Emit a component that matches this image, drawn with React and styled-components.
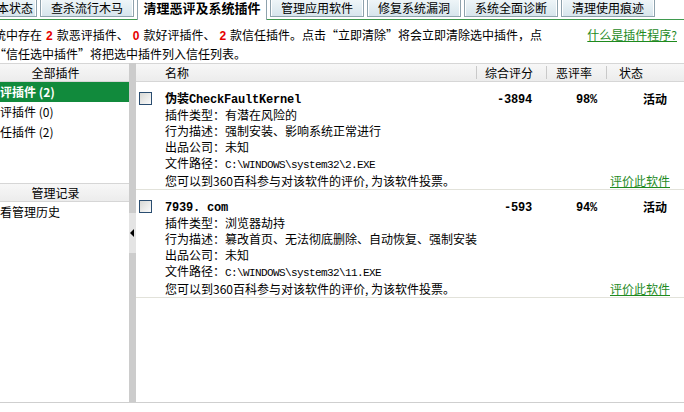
import React from 'react'
import styled, { createGlobalStyle } from 'styled-components'

const GlobalStyle = createGlobalStyle`
  html, body {
    margin: 0;
    padding: 0;
    background: #fff;
  }
  body {
    width: 684px;
    height: 412px;
    overflow: hidden;
    font-family: "Noto Sans CJK SC", "Liberation Sans", sans-serif;
    font-size: 12px;
    color: #000;
  }
`

const cols = `
  display: grid;
  grid-template-columns: 340px 70px 60px 1fr;
`

const TabStrip = styled.div`
  display: flex;
  align-items: flex-start;
  gap: 3px;
  height: 19px;
  margin-left: -33px;
  border-bottom: 1px solid #3f9a4e;
`

const Tab = styled.div`
  position: relative;
  z-index: ${p => (p.$active ? 1 : 0)};
  flex: none;
  box-sizing: border-box;
  width: ${p => p.$w}px;
  height: ${p => (p.$active ? 20 : 17)}px;
  padding-right: ${p => (p.$end ? 3 : 0)}px;
  border: 1px solid #8ea2ad;
  border-top: none;
  border-bottom: ${p => (p.$active ? 'none' : '1px solid #8ea2ad')};
  background: ${p => (p.$active ? '#fff' : 'linear-gradient(#eef5f8, #d7e5ec)')};
  box-shadow: inset 1px 0 0 #fff, inset -1px 0 0 #fff;
  text-align: ${p => (p.$end ? 'right' : 'center')};
  line-height: 16px;
  font-size: ${p => (p.$active ? 13 : 12)}px;
  font-weight: ${p => (p.$active ? 'bold' : 'normal')};
  white-space: nowrap;
`

const Desc = styled.div`
  display: flex;
  justify-content: space-between;
  align-items: flex-start;
  height: 34px;
  margin-top: 6px;
  line-height: 17px;
`

const DescText = styled.div`
  margin-left: -6px;
  white-space: nowrap;
`

const Count = styled.b`
  margin: 0 4px;
  color: #e60000;
  font-family: "Liberation Sans", sans-serif;
`

const HelpLink = styled.a`
  margin-right: 7px;
  color: #1e8a1e;
  text-decoration: underline;
  cursor: pointer;
`

const Main = styled.div`
  display: flex;
  height: 339px;
  margin-top: 3px;
  border-bottom: 1px solid #cfcfcf;
`

const Side = styled.div`
  flex: none;
  display: flex;
  flex-direction: column;
  width: 147px;
  margin-left: -18px;
`

const PanelHead = styled.div`
  height: 17px;
  margin-top: ${p => p.$top || 0}px;
  border-top: 1px solid #d6d6d6;
  border-bottom: 1px solid #d6d6d6;
  background: linear-gradient(#f7f7f7, #ececec);
  line-height: 17px;
  text-align: center;
`

const SideItem = styled.div`
  height: 20px;
  padding-left: 6px;
  line-height: 20px;
  white-space: nowrap;
  background: ${p => (p.$active ? '#118a3c' : 'transparent')};
  color: ${p => (p.$active ? '#fff' : '#000')};
  font-weight: ${p => (p.$active ? 'bold' : 'normal')};
`

const Splitter = styled.div`
  flex: none;
  display: flex;
  align-items: center;
  width: 7px;
  background: #cccccc;
`

const SplitHandle = styled.div`
  display: flex;
  align-items: center;
  justify-content: center;
  width: 7px;
  height: 40px;
  background: #e4e4e4;

  &::before {
    content: '';
    border-right: 4px solid #000;
    border-top: 4px solid transparent;
    border-bottom: 4px solid transparent;
    margin-right: 2px;
  }
`

const Content = styled.div`
  flex: 1;
  min-width: 0;
  display: flex;
  flex-direction: column;
`

const ListHead = styled.div`
  ${cols}
  height: 17px;
  border-top: 1px solid #d6d6d6;
  border-bottom: 1px solid #d6d6d6;
  background: linear-gradient(#f7f7f7, #ececec);
  line-height: 17px;
`

const HeadCell = styled.div`
  position: relative;
  padding-left: ${p => p.$pad}px;
  white-space: nowrap;

  &::before {
    content: '';
    display: ${p => (p.$sep ? 'block' : 'none')};
    position: absolute;
    left: 0;
    top: 2px;
    bottom: 2px;
    width: 1px;
    background: #c9c9c9;
  }
`

const Item = styled.div`
  padding-top: 7px;
  border-bottom: 1px solid #e2e2da;
`

const ItemTop = styled.div`
  ${cols}
  align-items: center;
  height: 16px;
`

const NameCell = styled.div`
  display: flex;
  align-items: center;
  gap: 13px;
  padding-left: 3px;
  font-weight: bold;
  white-space: nowrap;
`

const Check = styled.span`
  flex: none;
  box-sizing: border-box;
  width: 13px;
  height: 13px;
  border: 1px solid #2a4d70;
  background: linear-gradient(135deg, #d8d8d4, #fbfbfb);
`

const Mono = styled.span`
  font-family: "Liberation Mono", monospace;
  font-size: ${p => (p.$bold ? 12 : 11)}px;
  font-weight: ${p => (p.$bold ? 'bold' : 'normal')};
  letter-spacing: ${p => (p.$bold ? '-0.2px' : '-0.6px')};
`

const ValueCell = styled.div`
  padding-right: ${p => p.$pad}px;
  text-align: right;
  font-weight: bold;
  white-space: nowrap;
`

const Details = styled.div`
  margin-top: 2px;
  padding-left: 29px;
  line-height: 16px;
`

const DetailLine = styled.div`
  display: flex;
  justify-content: space-between;
  padding-right: 14px;
  white-space: nowrap;
`

const RateLink = styled.a`
  color: #1e8a1e;
  text-decoration: underline;
  cursor: pointer;
`

const tabs = [
  { label: '基本状态', w: 70, end: true },
  { label: '查杀流行木马', w: 94 },
  { label: '清理恶评及系统插件', w: 130, active: true },
  { label: '管理应用软件', w: 94 },
  { label: '修复系统漏洞', w: 94 },
  { label: '系统全面诊断', w: 94 },
  { label: '清理使用痕迹', w: 94 },
]

const plugins = [
  {
    cn: '伪装',
    latin: 'CheckFaultKernel',
    score: '-3894',
    rate: '98%',
    status: '活动',
    type: '有潜在风险的',
    action: '强制安装、影响系统正常进行',
    company: '未知',
    path: 'C:\\WINDOWS\\system32\\2.EXE',
  },
  {
    cn: '',
    latin: '7939. com',
    score: '-593',
    rate: '94%',
    status: '活动',
    type: '浏览器劫持',
    action: '篡改首页、无法彻底删除、自动恢复、强制安装',
    company: '未知',
    path: 'C:\\WINDOWS\\system32\\11.EXE',
  },
]

const App = () => {
  return (
    <>
      <GlobalStyle />
      <TabStrip>
        {tabs.map(t => (
          <Tab key={t.label} $w={t.w} $end={t.end} $active={t.active}>{t.label}</Tab>
        ))}
      </TabStrip>

      <Desc>
        <DescText>
          统中存在<Count>2</Count>款恶评插件、<Count>0</Count>款好评插件、<Count>2</Count>款信任插件。点击“立即清除”将会立即清除选中插件，点
          <br />
          “信任选中插件”将把选中插件列入信任列表。
        </DescText>
        <HelpLink>什么是插件程序?</HelpLink>
      </Desc>

      <Main>
        <Side>
          <PanelHead>全部插件</PanelHead>
          <SideItem $active>恶评插件 (2)</SideItem>
          <SideItem>好评插件 (0)</SideItem>
          <SideItem>信任插件 (2)</SideItem>
          <PanelHead $top={41}>管理记录</PanelHead>
          <SideItem>查看管理历史</SideItem>
        </Side>

        <Splitter>
          <SplitHandle />
        </Splitter>

        <Content>
          <ListHead>
            <HeadCell $pad={29}>名称</HeadCell>
            <HeadCell $pad={9} $sep>综合评分</HeadCell>
            <HeadCell $pad={10} $sep>恶评率</HeadCell>
            <HeadCell $pad={13} $sep>状态</HeadCell>
          </ListHead>

          {plugins.map(p => (
            <Item key={p.latin}>
              <ItemTop>
                <NameCell>
                  <Check />
                  <span>
                    {p.cn}
                    <Mono $bold>{p.latin}</Mono>
                  </span>
                </NameCell>
                <ValueCell $pad={14}><Mono $bold>{p.score}</Mono></ValueCell>
                <ValueCell $pad={9}><Mono $bold>{p.rate}</Mono></ValueCell>
                <ValueCell $pad={17}>{p.status}</ValueCell>
              </ItemTop>
              <Details>
                <DetailLine>插件类型：{p.type}</DetailLine>
                <DetailLine>行为描述：{p.action}</DetailLine>
                <DetailLine>出品公司：{p.company}</DetailLine>
                <DetailLine>
                  <span>文件路径：<Mono>{p.path}</Mono></span>
                </DetailLine>
                <DetailLine>
                  <span>您可以到360百科参与对该软件的评价, 为该软件投票。</span>
                  <RateLink>评价此软件</RateLink>
                </DetailLine>
              </Details>
            </Item>
          ))}
        </Content>
      </Main>
    </>
  )
}

export default App
